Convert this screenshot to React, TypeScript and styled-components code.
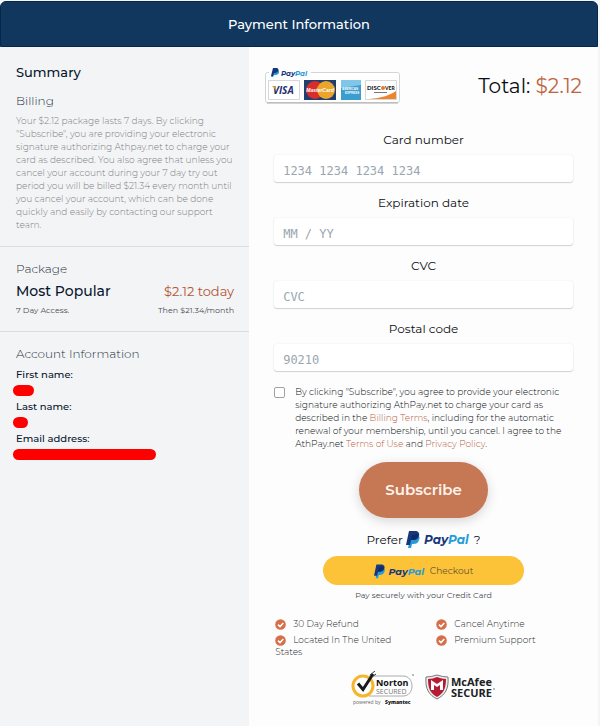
import React from "react";
import styled, { createGlobalStyle } from "styled-components";

const GlobalStyle = createGlobalStyle`
  *, *::before, *::after { box-sizing: border-box; }
  body {
    margin: 0;
    background: #f4f5f6;
    color: #0b0e12;
    font-family: Montserrat, Inter, "Open Sans", sans-serif;
  }
  h1, h2, h3, p, ul, dl, dd { margin: 0; padding: 0; }
`;

const Page = styled.div`
  min-height: 100vh;
  display: flex;
  flex-direction: column;
  padding: 1px 2px 0 0;
`;

const Header = styled.header`
  display: flex;
  align-items: center;
  justify-content: center;
  height: 46px;
  background: #11375f;
  border: 1px solid #07264b;
  border-radius: 6px 6px 0 0;
`;

const Title = styled.h1`
  color: #fff;
  font-size: 13px;
  font-weight: 500;
  line-height: 20px;
`;

const Columns = styled.main`
  flex: 1;
  display: grid;
  grid-template-columns: 5fr 7fr;
`;

const Sidebar = styled.aside`
  background: #f3f4f6;
`;

const Section = styled.section`
  padding: 13px 15px 13px 16px;
  border-bottom: 1px solid #dadcdf;

  &:first-child {
    padding-top: 16px;
  }

  &:last-child {
    border-bottom: 0;
  }
`;

const SummaryTitle = styled.h2`
  padding-bottom: 11px;
  color: #07152d;
  font-size: 13px;
  font-weight: 500;
  line-height: 18px;
`;

const SectionTitle = styled.h3`
  color: #27323e;
  font-size: 12px;
  font-weight: 300;
  line-height: 18px;
`;

const BillingText = styled.p`
  padding: 4px 0 2px;
  color: #7e8083;
  font-size: 9px;
  font-weight: 300;
  line-height: 13px;
`;

const Split = styled.div<{ $small?: boolean }>`
  display: flex;
  justify-content: space-between;
  color: ${(p) => (p.$small ? "#4b4d52" : "#07152d")};
  font-size: ${(p) => (p.$small ? "8px" : "14px")};
  font-weight: ${(p) => (p.$small ? 400 : 500)};
  line-height: ${(p) => (p.$small ? "13px" : "26px")};
  padding-bottom: ${(p) => (p.$small ? "1px" : "0")};
`;

const Price = styled.span`
  color: #b25432;
  font-size: 13px;
  font-weight: 400;
`;

const Details = styled.dl`
  padding-top: 4px;
`;

const Term = styled.dt`
  color: #07152d;
  font-size: 10px;
  font-weight: 500;
  line-height: 16px;
`;

const Redacted = styled.dd<{ $width: number }>`
  && { margin: 2px 0 3px -3px; }
  width: ${(p) => p.$width}px;
  height: 11px;
  border-radius: 6px;
  background: #f00;
`;

const Checkout = styled.form`
  display: flex;
  flex-direction: column;
  align-items: center;
  padding: 20px 25px 16px;
  background: #fdfdfd;
`;

const TotalRow = styled.div`
  align-self: stretch;
  display: flex;
  justify-content: space-between;
  align-items: center;
  margin: 0 -9px 27px;
`;

const Total = styled.p`
  font-size: 20px;
  line-height: 24px;

  span { color: #bd6440; }
`;

const Field = styled.label`
  display: flex;
  flex-direction: column;
  align-self: stretch;
  gap: 6px;
  margin-bottom: 12px;
  font-size: 12px;
  font-weight: 400;
  line-height: 18px;
  text-align: center;
`;

const FieldInput = styled.input`
  width: 100%;
  height: 27px;
  padding: 4px 9px 0;
  border: 0;
  border-radius: 3px;
  background: #fff;
  box-shadow: 0 1px 1px rgba(30, 40, 50, 0.18), 0 0 2px rgba(30, 40, 50, 0.1);
  font-family: "DejaVu Sans Mono", monospace;
  font-size: 12px;

  &::placeholder {
    color: #99a6b0;
    opacity: 1;
  }
`;

const Agreement = styled.label`
  display: flex;
  align-self: stretch;
  gap: 10px;
  padding-top: 2px;
  color: #0c1014;
  font-size: 9px;
  font-weight: 300;
  line-height: 13px;
`;

const Tick = styled.input`
  appearance: none;
  flex: none;
  width: 11px;
  height: 11px;
  margin: 2px 0 0;
  border: 1px solid #a0a1a4;
  border-radius: 2px;
  background: #fff;

  &:checked { background: #c67855; }
`;

const TextLink = styled.a`
  color: #b86446;
  text-decoration: none;
`;

const SubscribeButton = styled.button`
  margin: 12px 0 9px;
  padding: 16px 26px;
  border: 0;
  border-radius: 28px;
  background: #c67855;
  box-shadow: 0 3px 12px rgba(0, 0, 0, 0.16);
  color: #fff4ec;
  font-family: inherit;
  font-size: 15px;
  font-weight: 600;
  line-height: 24px;
`;

const Prefer = styled.p`
  display: flex;
  align-items: center;
  gap: 3px;
  height: 24px;
  font-size: 12px;
`;

const PayPalButton = styled.button`
  display: flex;
  align-items: center;
  justify-content: center;
  gap: 4px;
  width: 201px;
  max-width: 100%;
  height: 29px;
  margin-top: 5px;
  padding: 0;
  border: 0;
  border-radius: 15px;
  background: #fcc238;
  color: #665532;
  font-family: inherit;
  font-size: 9px;
`;

const Note = styled.p`
  padding: 3px 0 16px;
  color: #45494e;
  font-size: 8px;
  line-height: 14px;
`;

const Features = styled.ul`
  align-self: stretch;
  display: grid;
  grid-template-columns: 124px 1fr;
  column-gap: 37px;
  padding-left: 1px;
  list-style: none;
  color: #2c2e31;
  font-size: 9px;
  font-weight: 300;
  line-height: 12px;
`;

const Feature = styled.li`
  min-height: 16px;

  svg {
    margin-right: 7px;
    vertical-align: -3px;
  }
`;

const Badges = styled.div`
  display: flex;
  gap: 9px;
  padding-top: 13px;
`;

function PayPalLogo({ width, height }: { width: number; height: number }) {
  return (
    <svg width={width} height={height} viewBox="0 0 65 20" role="img" aria-label="PayPal">
      <path d="M5 6h6c3 1 3 3 2 5-1 3-3 4-6 4H6l-1 4H2z" fill="#259bd7" />
      <path d="M3 2h6c3 0 5 2 4 5-1 3-3 4-6 4H5l-1 5H0z" fill="#17377d" />
      <path d="M6 6l6-1c0 4-2 6-6 6H5z" fill="#102a65" />
      <text x="18" y="15" fontFamily="Montserrat, Lato, sans-serif" fontSize="12" fontWeight="700" fontStyle="italic" fill="#17377d">
        Pay<tspan fill="#259bd7">Pal</tspan>
      </text>
    </svg>
  );
}

function CardLogos() {
  return (
    <svg width="136" height="37" viewBox="0 0 136 37" role="img" aria-label="PayPal, Visa, MasterCard, American Express, Discover">
      <rect x="0.5" y="5.500" width="134" height="30" rx="2" fill="#fff" stroke="#d2d4d5" />
      <path d="M2 36h131" stroke="#aaa" />
      <path d="M4 0h42v11H4z" fill="#fdfdfd" />
      <path d="M9 3h4c2 1 1 5-2 5H9l-1 2H6z" fill="#259bd7" />
      <path d="M8 1h4c3 1 1 5-2 5H9L8 9H6z" fill="#17377d" />
      <text x="16" y="9" fontFamily="Montserrat, Lato, sans-serif" fontSize="7" fontWeight="700" fontStyle="italic" fill="#17377d">
        Pay<tspan fill="#259bd7">Pal</tspan>
      </text>
      <path d="M3.500 13.500h31v19h-31zM100.500 13.500h31v19h-31z" fill="#fff" stroke="#d5d7d9" />
      <text x="8" y="27" fontFamily="Open Sans, sans-serif" fontSize="10" fontWeight="700" fontStyle="italic" fill="#1f2f70">VISA</text>
      <path d="M7 19h3l2 5z" fill="#d59b34" />
      <path d="M39 13h32v20H39z" fill="#203f70" />
      <circle cx="50" cy="23" r="9" fill="#d82d2b" />
      <circle cx="61" cy="23" r="9" fill="#eca52b" />
      <text x="55" y="25" textAnchor="middle" fontFamily="Liberation Sans, sans-serif" fontSize="5" fontWeight="700" fontStyle="italic" fill="#fff">MasterCard</text>
      <path d="M76 13h20v20H76z" fill="#3c9dcf" />
      <path d="M76 13h20v5L76 21z" fill="#80c7e7" />
      <text x="77" y="23" fontFamily="Liberation Sans, sans-serif" fontSize="3" fontWeight="700" fill="#fff">AMERICAN</text>
      <text x="80" y="27" fontFamily="Liberation Sans, sans-serif" fontSize="3" fontWeight="700" fill="#fff">EXPRESS</text>
      <path d="M104 32c13-1 21-4 27-8v8z" fill="#ef842f" />
      <text x="102" y="23" fontFamily="Lato, sans-serif" fontSize="6" fontWeight="900" fill="#222">DISC</text>
      <circle cx="118" cy="21" r="2" fill="#ed792b" />
      <text x="120" y="23" fontFamily="Lato, sans-serif" fontSize="5" fontWeight="900" fill="#222">VER</text>
      <path d="M109 25.500h13" stroke="#777" />
    </svg>
  );
}

function CheckIcon() {
  return (
    <svg width="11" height="11" viewBox="0 0 11 11" aria-hidden="true">
      <circle cx="5.500" cy="5.500" r="5.300" fill="#d66f48" />
      <path d="M3 5.600l2 2L8.300 4" fill="none" stroke="#fff" strokeWidth="1.500" />
    </svg>
  );
}

function NortonBadge() {
  return (
    <svg width="65" height="36" viewBox="0 0 65 36" role="img" aria-label="Norton Secured, powered by Symantec">
      <path d="M18 5h34c12 0 12 20 0 20H18" fill="#fff" stroke="#a8aaac" />
      <circle cx="12" cy="15" r="10" fill="#fff" stroke="#f5b62d" strokeWidth="3" />
      <path d="M7 12.500l5 6L22 3" fill="none" stroke="#171b1c" strokeWidth="3" />
      <path d="M19 4l5-4M21 6l4-3" stroke="#333" />
      <text x="25" y="15" fontFamily="Open Sans, sans-serif" fontSize="9" fontWeight="700" fill="#111">Norton</text>
      <text x="25" y="23" fontFamily="Open Sans, sans-serif" fontSize="7" fill="#777">SECURED</text>
      <text x="2" y="33" fontFamily="Open Sans, sans-serif" fontSize="5" fill="#666">powered by</text>
      <text x="34" y="33" fontFamily="Open Sans, sans-serif" fontSize="5" fontWeight="800" fill="#111">Symantec</text>
      <path d="M61 4h2" stroke="#777" />
    </svg>
  );
}

function McAfeeBadge() {
  return (
    <svg width="71" height="36" viewBox="0 0 71 36" role="img" aria-label="McAfee Secure">
      <path d="M1 6q5 0 11-2 6 2 11 2c1 12-3 18-11 22C4 24 0 18 1 6z" fill="#eceded" stroke="#76797d" />
      <path d="M3 8q5 0 9-2 5 2 9 2c0 9-2 14-9 18C5 22 3 17 3 8z" fill="#b51c32" />
      <path d="M6 19V9l6 4 6-4v10h-3v-5l-3 2-3-2v5z" fill="#fff" />
      <g fontFamily="Open Sans, sans-serif" fontWeight="700" fill="#202123">
        <text x="26" y="15" fontSize="11">McAfee</text>
        <text x="26" y="26" fontSize="11">SECURE</text>
      </g>
      <path d="M68 18h2" stroke="#777" />
    </svg>
  );
}

const FIELDS = [
  { name: "card", label: "Card number", placeholder: "1234 1234 1234 1234" },
  { name: "expiry", label: "Expiration date", placeholder: "MM / YY" },
  { name: "cvc", label: "CVC", placeholder: "CVC" },
  { name: "postal", label: "Postal code", placeholder: "90210" },
];

const ACCOUNT = [
  { label: "First name:", width: 21 },
  { label: "Last name:", width: 15 },
  { label: "Email address:", width: 143 },
];

const FEATURES = ["30 Day Refund", "Cancel Anytime", "Located In The United States", "Premium Support"];

export default function App() {
  return (
    <Page>
      <GlobalStyle />
      <Header><Title>Payment Information</Title></Header>
      <Columns>
        <Sidebar>
          <Section>
            <SummaryTitle>Summary</SummaryTitle>
            <SectionTitle>Billing</SectionTitle>
            <BillingText>
              Your $2.12 package lasts 7 days. By clicking "Subscribe", you are providing your electronic signature
              authorizing Athpay.net to charge your card as described. You also agree that unless you cancel your
              account during your 7 day try out period you will be billed $21.34 every month until you cancel your
              account, which can be done quickly and easily by contacting our support team.
            </BillingText>
          </Section>
          <Section>
            <SectionTitle>Package</SectionTitle>
            <Split><span>Most Popular</span><Price>$2.12 today</Price></Split>
            <Split $small><span>7 Day Access.</span><span>Then $21.34/month</span></Split>
          </Section>
          <Section>
            <SectionTitle>Account Information</SectionTitle>
            <Details>
              {ACCOUNT.map((row) => (
                <React.Fragment key={row.label}>
                  <Term>{row.label}</Term>
                  <Redacted $width={row.width} />
                </React.Fragment>
              ))}
            </Details>
          </Section>
        </Sidebar>
        <Checkout onSubmit={(e) => e.preventDefault()}>
          <TotalRow>
            <CardLogos />
            <Total>Total: <span>$2.12</span></Total>
          </TotalRow>
          {FIELDS.map((field) => (
            <Field key={field.name}>
              {field.label}
              <FieldInput name={field.name} placeholder={field.placeholder} />
            </Field>
          ))}
          <Agreement>
            <Tick type="checkbox" name="agree" />
            <span>
              By clicking "Subscribe", you agree to provide your electronic signature authorizing AthPay.net to charge
              your card as described in the <TextLink href="#billing">Billing Terms</TextLink>, including for the
              automatic renewal of your membership, until you cancel. I agree to the AthPay.net{" "}
              <TextLink href="#terms">Terms of Use</TextLink> and <TextLink href="#privacy">Privacy Policy</TextLink>.
            </span>
          </Agreement>
          <SubscribeButton type="submit">Subscribe</SubscribeButton>
          <Prefer>Prefer <PayPalLogo width={65} height={20} /> ?</Prefer>
          <PayPalButton type="button"><PayPalLogo width={52} height={16} /> Checkout</PayPalButton>
          <Note>Pay securely with your Credit Card</Note>
          <Features>
            {FEATURES.map((text) => (
              <Feature key={text}><CheckIcon />{text}</Feature>
            ))}
          </Features>
          <Badges><NortonBadge /><McAfeeBadge /></Badges>
        </Checkout>
      </Columns>
    </Page>
  );
}
